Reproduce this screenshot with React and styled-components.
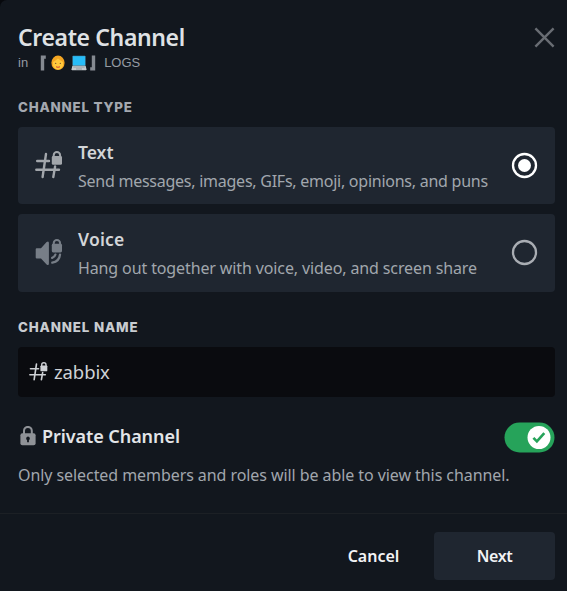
import React from 'react';
import styled, { createGlobalStyle } from 'styled-components';

const Global = createGlobalStyle`
  * { box-sizing: border-box; }
  body { margin: 0; background: #07090d; font-family: "Noto Sans", "Noto Sans CJK JP", sans-serif; }
  h1, h2, p { margin: 0; font-weight: 400; }
  svg { display: block; flex: none; }
  button { font-family: inherit; border: 0; padding: 0; }
`;

const Dialog = styled.main`
  width: 567px;
  height: 591px;
  display: flex;
  flex-direction: column;
  background: #12171e;
  border-radius: 7px 0 0 0;
  overflow: hidden;
`;
const Body = styled.div`
  height: 513px;
  padding: 22px 12px 0 18px;
`;
const Header = styled.header`
  display: flex;
  justify-content: space-between;
  height: 75px;
`;
const Title = styled.h1`
  font-size: 23px;
  line-height: 30px;
  font-weight: 600;
  letter-spacing: ${p => p.$spacing || 0}px;
  white-space: nowrap;
  color: #dfe1e4;
`;
const Category = styled.div`
  display: flex;
  align-items: center;
  height: 21px;
  font: 13px/21px "Liberation Sans", sans-serif;
  color: #959ba3;
`;
const Bracket = styled.span`
  width: 7px;
  margin-left: ${p => p.$left}px;
  display: flex;
  justify-content: ${p => p.$end ? 'flex-end' : 'flex-start'};
`;
const CategoryName = styled.span`
  margin-left: 7px;
`;
const CloseButton = styled.button`
  background: none;
  width: 21px;
  height: 30px;
  display: flex;
  align-items: center;
`;
const Label = styled.h2`
  font-family: Inter, sans-serif;
  font-size: 13.3px;
  line-height: 20px;
  height: 20px;
  margin-top: ${p => p.$top || 0}px;
  margin-bottom: ${p => p.$bottom}px;
  font-weight: 800;
  white-space: nowrap;
  letter-spacing: ${p => p.$spacing || 0}px;
  color: ${p => p.$color};
`;
const Option = styled.div`
  height: 77.5px;
  margin-bottom: 10px;
  padding: 0 17px 1px;
  border-radius: 4px;
  background: #1f2630;
  display: flex;
  align-items: center;
`;
const OptionText = styled.div`
  flex: 1;
  min-width: 0;
  margin-left: 15px;
  padding-top: 4px;
`;
const OptionName = styled.div`
  font-size: 17.5px;
  line-height: 28px;
  font-weight: 600;
  letter-spacing: ${p => p.$spacing || 0}px;
  color: #d3d5d8;
`;
const Description = styled.p`
  font-size: 16px;
  line-height: 31px;
  letter-spacing: ${p => p.$spacing || 0}px;
  white-space: nowrap;
  color: #a1a6ad;
`;
const NameField = styled.div`
  height: 50px;
  border-radius: 4px;
  background: #0a0b0f;
  display: flex;
  align-items: center;
  padding-left: 11px;
  gap: 6px;
  font-size: 18.5px;
  color: #cfd2d6;
`;
const FieldText = styled.span`
  letter-spacing: ${p => p.$spacing || 0}px;
`;
const PrivateRow = styled.div`
  margin-top: 25px;
  height: 31px;
  display: flex;
  align-items: center;
`;
const PrivateLabel = styled.span`
  flex: 1;
  margin-left: 5px;
  padding-bottom: 2px;
  font-size: 18px;
  line-height: 29px;
  font-weight: 600;
  letter-spacing: ${p => p.$spacing || 0}px;
  color: #e3e5e8;
`;
const PrivateHint = styled(Description)`
  margin-top: 7px;
`;
const Footer = styled.footer`
  height: 78px;
  border-top: 1px solid #1c2025;
  display: flex;
  justify-content: flex-end;
  align-items: center;
  padding: 7px 12px 0 0;
`;
const Action = styled.button`
  width: 121px;
  height: 48px;
  border-radius: 4px;
  background: ${p => p.$filled ? '#1f2630' : 'transparent'};
  color: #f2f3f5;
  font-size: 16px;
  font-weight: 600;
  letter-spacing: ${p => p.$spacing || 0}px;
`;

const Hash = ({ size, color, cutout }) => (
  <svg width={size} height={size} viewBox="0 0 28 28" fill="none">
    <path d="M11 3 7.6 26M20.1 15.5 18.3 26M2.2 10H14M1.3 18.7H24" stroke={color} strokeWidth="2.4" strokeLinecap="round" />
    <path d="M18.7 6V4.3a3.2 3.2 0 0 1 6.4 0V6" fill={cutout} stroke={color} strokeWidth="2" />
    <rect x="16.8" y="5" width="10.2" height="8.8" rx="1.4" fill={color} />
  </svg>
);
const Speaker = () => (
  <svg width="28" height="28" viewBox="0 0 28 28" fill="none">
    <path d="M.7 10.2q0-1 1-1H6l5.6-6.1q2.3-1.5 2.3 1v20.4q0 2.5-2.3 1L6 19.6H1.7q-1 0-1-1Z" fill="#777e87" />
    <path d="M18.7 6V4.3a3.2 3.2 0 0 1 6.4 0V6" stroke="#777e87" strokeWidth="2" />
    <rect x="16.8" y="4.8" width="10.2" height="8.7" rx="1.4" fill="#777e87" />
    <path d="M20.4 15.6c-.4 1.7-1.3 2.8-3.2 3.3M25 15.6c-.4 4.2-3.6 7.3-7.7 8.1" stroke="#777e87" strokeWidth="2.3" strokeLinecap="round" />
  </svg>
);
const Lock = () => (
  <svg width="19" height="22" viewBox="0 0 19 22" fill="none">
    <path d="M6 10V4.8a3.9 3.9 0 0 1 7.8 0V10" stroke="#8f9297" strokeWidth="2" />
    <rect x="2.4" y="7.3" width="15.2" height="12" rx="2" fill="#8f9297" />
    <path d="M10 10.5a2 2 0 0 1 .9 3.7v2.1H9.1v-2.1a2 2 0 0 1 .9-3.7Z" fill="#12171e" />
  </svg>
);
const Close = () => (
  <svg width="21" height="21" viewBox="0 0 21 21">
    <path d="m1.4 1.4 18.2 18.2m0-18.2L1.4 19.6" stroke="#696d73" strokeWidth="2.4" />
  </svg>
);
const Radio = ({ checked }) => (
  <svg width="27" height="27" viewBox="0 0 27 27">
    <circle cx="13.5" cy="13.5" r="11.5" fill="none" stroke={checked ? '#fff' : '#a9adb3'} strokeWidth="2.3" />
    {checked && <circle cx="13.5" cy="13.5" r="6.5" fill="#fff" />}
  </svg>
);
const Toggle = () => (
  <svg width="51" height="31" viewBox="0 0 51 31">
    <rect x=".5" y=".5" width="50" height="30" rx="15" fill="#26a35a" />
    <circle cx="35" cy="15.5" r="11.5" fill="#fff" />
    <path d="m29.4 15.8 3.5 3.6 7.4-8.3" fill="none" stroke="#26a35a" strokeWidth="2.6" />
  </svg>
);
const Face = () => (
  <svg width="14" height="16" viewBox="0 0 14 16">
    <ellipse cx="7" cy="7.8" rx="6.6" ry="7.2" fill="#f5a623" />
    <path d="M2 7q2.5-1.5 5-3.6 2.5 2.1 5 3.6v3.6q-1.6 4-5 4T2 10.6Z" fill="#ffc93c" />
    <circle cx="4.7" cy="8.3" r=".65" fill="#65432d" />
    <circle cx="9.3" cy="8.3" r=".65" fill="#65432d" />
    <path d="M5 11.8q2 1 4 0" stroke="#d04432" strokeWidth="1" fill="none" />
  </svg>
);
const Laptop = () => (
  <svg width="16" height="16" viewBox="0 0 16 16">
    <rect x="1.4" y=".8" width="13.2" height="10" rx=".8" fill="#3c8fb5" />
    <rect x="2" y="1.3" width="12" height="9" fill="#27bcf8" />
    <path d="m1.4 10.8-1 3.7q0 .7.8.7h13.6q.8 0 .8-.7l-1-3.7Z" fill="#c4c9cd" />
    <path d="M2.3 12h11.4" stroke="#8f979e" strokeWidth=".9" />
    <path d="M5 14h6" stroke="#8f979e" />
  </svg>
);
const BracketMark = ({ end }) => (
  <svg width="6" height="16" viewBox="0 0 6 16">
    <path d={end ? 'M1.8.5H5.2v15H.2v-3.2h1.6Z' : 'M.8.5h5v3.2H4.2v11.8H.8Z'} fill="#858a91" />
  </svg>
);
const Spacer = styled.span`width: ${p => p.$width}px;`;

export default function App() {
  return (
    <>
      <Global />
      <Dialog>
        <Body>
          <Header>
            <div>
              <Title $spacing={-0.37}>Create Channel</Title>
              <Category>
                <span>in</span>
                <Bracket $left={12}><BracketMark /></Bracket>
                <Spacer $width={4} /><Face /><Spacer $width={6} /><Laptop />
                <Bracket $left={3}><BracketMark end /></Bracket>
                <CategoryName>LOGS</CategoryName>
              </Category>
            </div>
            <CloseButton aria-label="Close"><Close /></CloseButton>
          </Header>
          <Label $color="#a4a8af" $top={0.4} $bottom={9.6} $spacing={0.83}>CHANNEL TYPE</Label>
          <Option>
            <Hash size={28} color="#a2a6ab" />
            <OptionText>
              <OptionName>Text</OptionName>
              <Description $spacing={-0.25}>Send messages, images, GIFs, emoji, opinions, and puns</Description>
            </OptionText>
            <Radio checked />
          </Option>
          <Option>
            <Speaker />
            <OptionText>
              <OptionName $spacing={0.2}>Voice</OptionName>
              <Description $spacing={-0.12}>Hang out together with voice, video, and screen share</Description>
            </OptionText>
            <Radio />
          </Option>
          <Label $color="#c9ccd0" $top={25} $bottom={10} $spacing={0.87}>CHANNEL NAME</Label>
          <NameField><Hash size={19} color="#cfd2d6" /><FieldText $spacing={-0.1}>zabbix</FieldText></NameField>
          <PrivateRow><Lock /><PrivateLabel $spacing={-0.07}>Private Channel</PrivateLabel><Toggle /></PrivateRow>
          <PrivateHint $spacing={-0.07}>Only selected members and roles will be able to view this channel.</PrivateHint>
        </Body>
        <Footer>
          <Action>Cancel</Action>
          <Action $filled $spacing={-0.4}>Next</Action>
        </Footer>
      </Dialog>
    </>
  );
}
